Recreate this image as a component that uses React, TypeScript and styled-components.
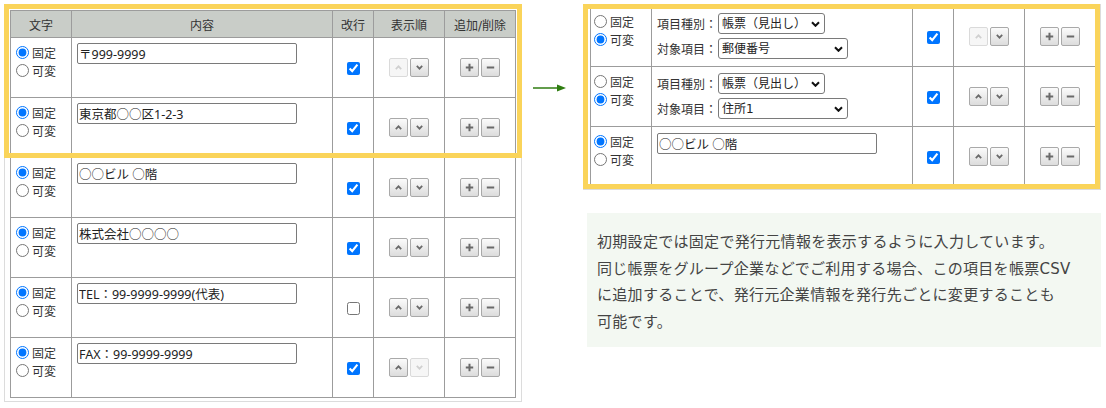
import { createGlobalStyle, styled } from "styled-components";

const GlobalStyle = createGlobalStyle`
  html, body {
    margin: 0;
    background: #fff;
  }
  body {
    font-family: "DejaVu Sans", "Noto Sans CJK JP", sans-serif;
    color: #333;
  }
`;

const Page = styled.div`
  display: flex;
  align-items: flex-start;
  width: 1106px;
  height: 408px;
  padding: 4px 0 0 4px;
  box-sizing: border-box;
  overflow: hidden;
`;

const Shot = styled.div<{ $pad: string }>`
  position: relative;
  flex: none;
  border: 1px solid #dcdcdc;
  padding: ${({ $pad }) => $pad};
  background: #fff;
`;

const Highlight = styled.div<{ $width: string; $height: number }>`
  position: absolute;
  top: -1px;
  left: -1px;
  width: ${({ $width }) => $width};
  height: ${({ $height }) => $height}px;
  box-sizing: border-box;
  border: 5px solid #fad45a;
  pointer-events: none;
`;

const Grid = styled.table`
  border-collapse: collapse;
  table-layout: fixed;
  width: 505px;
  font-size: 12px;
`;

const Col = styled.col<{ $w: number }>`
  width: ${({ $w }) => $w}px;
`;

const HeadCell = styled.th`
  height: 26px;
  padding: 0;
  border: 1px solid #9c9c9c;
  background: #c9cdc8;
  color: #333;
  font-weight: normal;
  text-align: center;
  vertical-align: middle;
`;

const Cell = styled.td<{ $middle?: boolean }>`
  height: 59px;
  padding: 0;
  border: 1px solid #9c9c9c;
  vertical-align: ${({ $middle }) => ($middle ? "middle" : "top")};
  text-align: ${({ $middle }) => ($middle ? "center" : "left")};
`;

const RadioStack = styled.div<{ $inset: number }>`
  display: flex;
  flex-direction: column;
  padding: 5px 0 0 ${({ $inset }) => $inset}px;
`;

const RadioLine = styled.label`
  display: flex;
  align-items: center;
  gap: 3px;
  height: 18px;
  color: #333;

  input {
    width: 13px;
    height: 13px;
    margin: 0;
  }
`;

const ContentBox = styled.div<{ $top: number }>`
  padding: ${({ $top }) => $top}px 0 0 5px;
`;

const TextField = styled.input`
  display: block;
  width: 220px;
  height: 21px;
  box-sizing: border-box;
  margin: 0;
  padding: 0 1px;
  border: 1px solid #7a7a7a;
  border-radius: 2px;
  font-family: "Noto Sans", "Noto Sans CJK JP", sans-serif;
  font-size: 12.5px;
  color: #222;
  background: #fff;
`;

const FieldLine = styled.div`
  display: flex;
  align-items: center;
  height: 21px;
  margin-bottom: 4px;
`;

const FieldLabel = styled.span`
  width: 61px;
  flex: none;
  color: #333;
`;

const SelectWrap = styled.div<{ $w: number }>`
  position: relative;
  width: ${({ $w }) => $w}px;
  height: 21px;
`;

const Select = styled.select`
  appearance: none;
  width: 100%;
  height: 21px;
  margin: 0;
  padding: 0 0 0 3px;
  border: 1px solid #7a7a7a;
  border-radius: 3px;
  background: #fff;
  font: inherit;
  font-size: 12px;
  color: #222;
`;

const Chevron = styled.svg`
  position: absolute;
  right: 5px;
  top: 8px;
  pointer-events: none;
`;

const Check = styled.input`
  width: 13px;
  height: 13px;
  margin: 0;
  vertical-align: middle;
`;

const BtnPair = styled.span`
  display: inline-flex;
  gap: 2px;
  vertical-align: middle;
`;

const SmallBtn = styled.button<{ $off?: boolean }>`
  display: inline-flex;
  align-items: center;
  justify-content: center;
  width: 19px;
  height: 19px;
  padding: 0;
  border: 1px solid ${({ $off }) => ($off ? "#dadada" : "#a9a9a9")};
  border-radius: 2px;
  background: ${({ $off }) =>
    $off ? "#f6f6f6" : "linear-gradient(#fbfbfb, #dcdcdc)"};
  color: ${({ $off }) => ($off ? "#d0d0d0" : "#6a6a6a")};
`;

const ArrowSlot = styled.div`
  flex: none;
  width: 61px;
  padding: 74px 0 0 11px;
  box-sizing: border-box;
`;

const RightCol = styled.div`
  display: flex;
  flex-direction: column;
  flex: none;
`;

const Note = styled.p`
  width: 514px;
  margin: 23px 0 0 4px;
  padding: 16px 10px 11px;
  box-sizing: border-box;
  background: #f3f8f2;
  color: #444;
  font-size: 15px;
  line-height: 26.7px;
  letter-spacing: 0.3px;
  white-space: nowrap;
`;

const Caret = ({ up }: { up?: boolean }) => (
  <svg width="7" height="5" viewBox="0 0 7 5">
    <polyline
      points={up ? "0.8,4.2 3.5,1.3 6.2,4.2" : "0.8,0.8 3.5,3.7 6.2,0.8"}
      fill="none"
      stroke="currentColor"
      strokeWidth="1.7"
    />
  </svg>
);

const Plus = () => (
  <svg width="9" height="9" viewBox="0 0 9 9">
    <path d="M4.5 0.8v7.4M0.8 4.5h7.4" stroke="currentColor" strokeWidth="2" />
  </svg>
);

const Minus = () => (
  <svg width="9" height="9" viewBox="0 0 9 9">
    <path d="M0.8 4.5h7.4" stroke="currentColor" strokeWidth="2" />
  </svg>
);

const Columns = () => (
  <colgroup>
    <Col $w={61} />
    <Col $w={261} />
    <Col $w={41} />
    <Col $w={71} />
    <Col $w={71} />
  </colgroup>
);

type Mode = "fixed" | "var";

function ModeRadios({ name, mode, inset }: { name: string; mode: Mode; inset: number }) {
  return (
    <RadioStack $inset={inset}>
      <RadioLine>
        <input type="radio" name={name} defaultChecked={mode === "fixed"} />
        固定
      </RadioLine>
      <RadioLine>
        <input type="radio" name={name} defaultChecked={mode === "var"} />
        可変
      </RadioLine>
    </RadioStack>
  );
}

function Controls({
  checked,
  first,
  last,
}: {
  checked: boolean;
  first?: boolean;
  last?: boolean;
}) {
  return (
    <>
      <Cell $middle>
        <Check type="checkbox" defaultChecked={checked} />
      </Cell>
      <Cell $middle>
        <BtnPair>
          <SmallBtn $off={first}>
            <Caret up />
          </SmallBtn>
          <SmallBtn $off={last}>
            <Caret />
          </SmallBtn>
        </BtnPair>
      </Cell>
      <Cell $middle>
        <BtnPair>
          <SmallBtn>
            <Plus />
          </SmallBtn>
          <SmallBtn>
            <Minus />
          </SmallBtn>
        </BtnPair>
      </Cell>
    </>
  );
}

const fixedRows = [
  { text: "〒999-9999", checked: true },
  { text: "東京都○○区1-2-3", checked: true },
  { text: "○○ビル ○階", checked: true },
  { text: "株式会社○○○○", checked: true },
  { text: "TEL：99-9999-9999(代表)", checked: false },
  { text: "FAX：99-9999-9999", checked: true },
];

function Picker({ value, width }: { value: string; width: number }) {
  return (
    <SelectWrap $w={width}>
      <Select defaultValue={value}>
        <option>{value}</option>
      </Select>
      <Chevron width="9" height="6" viewBox="0 0 9 6">
        <polyline points="1,1.2 4.5,4.8 8,1.2" fill="none" stroke="#111" strokeWidth="2" />
      </Chevron>
    </SelectWrap>
  );
}

export default function App() {
  return (
    <>
      <GlobalStyle />
      <Page>
        <Shot $pad="5px 5px 3px 5px">
          <Grid>
            <Columns />
            <thead>
              <tr>
                <HeadCell>文字</HeadCell>
                <HeadCell>内容</HeadCell>
                <HeadCell>改行</HeadCell>
                <HeadCell>表示順</HeadCell>
                <HeadCell>追加/削除</HeadCell>
              </tr>
            </thead>
            <tbody>
              {fixedRows.map((row, i) => (
                <tr key={row.text}>
                  <Cell>
                    <ModeRadios name={`left-${i}`} mode="fixed" inset={5} />
                  </Cell>
                  <Cell>
                    <ContentBox $top={5}>
                      <TextField defaultValue={row.text} />
                    </ContentBox>
                  </Cell>
                  <Controls
                    checked={row.checked}
                    first={i === 0}
                    last={i === fixedRows.length - 1}
                  />
                </tr>
              ))}
            </tbody>
          </Grid>
          <Highlight $width="calc(100% + 2px)" $height={154} />
        </Shot>

        <ArrowSlot>
          <svg width="34" height="10" viewBox="0 0 34 10">
            <path d="M0 5h26" stroke="#2f7d10" strokeWidth="1.5" />
            <polygon points="24,1.5 33,5 24,8.5" fill="#2f7d10" />
          </svg>
        </ArrowSlot>

        <RightCol>
          <Shot $pad="1px 4px 2px 6px">
            <Grid>
              <Columns />
              <tbody>
                <tr>
                  <Cell>
                    <ModeRadios name="right-0" mode="var" inset={3} />
                  </Cell>
                  <Cell>
                    <ContentBox $top={6}>
                      <FieldLine>
                        <FieldLabel>項目種別：</FieldLabel>
                        <Picker value="帳票（見出し）" width={107} />
                      </FieldLine>
                      <FieldLine>
                        <FieldLabel>対象項目：</FieldLabel>
                        <Picker value="郵便番号" width={130} />
                      </FieldLine>
                    </ContentBox>
                  </Cell>
                  <Controls checked first />
                </tr>
                <tr>
                  <Cell>
                    <ModeRadios name="right-1" mode="var" inset={3} />
                  </Cell>
                  <Cell>
                    <ContentBox $top={6}>
                      <FieldLine>
                        <FieldLabel>項目種別：</FieldLabel>
                        <Picker value="帳票（見出し）" width={107} />
                      </FieldLine>
                      <FieldLine>
                        <FieldLabel>対象項目：</FieldLabel>
                        <Picker value="住所1" width={130} />
                      </FieldLine>
                    </ContentBox>
                  </Cell>
                  <Controls checked />
                </tr>
                <tr>
                  <Cell>
                    <ModeRadios name="right-2" mode="fixed" inset={3} />
                  </Cell>
                  <Cell>
                    <ContentBox $top={6}>
                      <TextField defaultValue="○○ビル ○階" />
                    </ContentBox>
                  </Cell>
                  <Controls checked />
                </tr>
              </tbody>
            </Grid>
            <Highlight $width="calc(100% + 1px)" $height={185} />
          </Shot>

          <Note>
            初期設定では固定で発行元情報を表示するように入力しています。
            <br />
            同じ帳票をグループ企業などでご利用する場合、この項目を帳票CSV
            <br />
            に追加することで、発行元企業情報を発行先ごとに変更することも
            <br />
            可能です。
          </Note>
        </RightCol>
      </Page>
    </>
  );
}
